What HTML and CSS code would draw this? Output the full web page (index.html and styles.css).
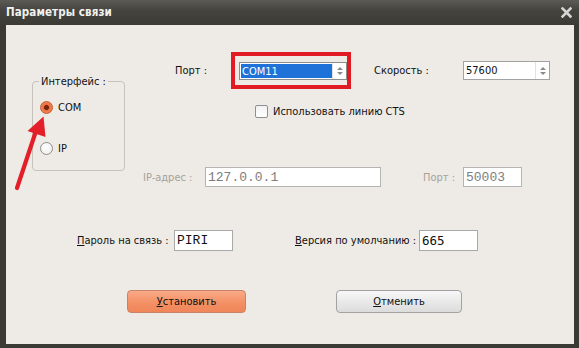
FILE: index.html
```html
<!DOCTYPE html>
<html lang="ru">
<head>
<meta charset="utf-8">
<title>Параметры связи</title>
<link rel="stylesheet" href="styles.css">
</head>
<body>
<div class="window">
  <div class="titlebar">
    <span class="title">Параметры связи</span>
    <svg class="close" width="11" height="11" viewBox="0 0 11 11"><path d="M1.5 1.5 L9.5 9.5 M9.5 1.5 L1.5 9.5" stroke="#d6d6d4" stroke-width="2.6" stroke-linecap="square"/></svg>
  </div>
  <div class="panel">
    <div class="top">
      <fieldset class="group">
        <legend>Интерфейс :</legend>
        <div class="radio-row first"><span class="radio on"></span><span>COM</span></div>
        <div class="radio-row second"><span class="radio"></span><span>IP</span></div>
      </fieldset>
      <div class="right">
        <div class="row row-port">
          <span class="lbl w-port">Порт :</span>
          <span class="mark">
            <span class="spin combo"><span class="spin-val sel">COM11</span><span class="spin-btn"><i class="up"></i><i class="down"></i></span></span>
          </span>
          <span class="lbl w-speed">Скорость :</span>
          <span class="spin speed"><span class="spin-val">57600</span><span class="spin-btn"><i class="up"></i><i class="down"></i></span></span>
        </div>
        <div class="row row-cts">
          <span class="check"></span><span>Использовать линию CTS</span>
        </div>
        <div class="row row-ip">
          <span class="lbl dis w-ip">IP-адрес :</span>
          <span class="field mono dis-field ip">127.0.0.1</span>
          <span class="lbl dis w-ipport">Порт :</span>
          <span class="field mono dis-field ipport">50003</span>
        </div>
      </div>
    </div>
    <div class="row row-pass">
      <span class="lbl w-pass"><u>П</u>ароль на связь :</span>
      <span class="field mono small">PIRI</span>
      <span class="lbl w-ver"><u>В</u>ерсия по умолчанию :</span>
      <span class="field mono2 small">665</span>
    </div>
    <div class="row row-buttons">
      <span class="btn primary"><u>У</u>становить</span>
      <span class="btn secondary"><u>О</u>тменить</span>
    </div>
    <svg class="arrow" width="60" height="170" viewBox="0 0 60 170"><path d="M11 163 L31 103" stroke="#e3202a" stroke-width="4.2" stroke-linecap="round"/><polygon points="37.5,91.5 21.5,106 39.5,112" fill="#e3202a"/></svg>
  </div>
</div>
</body>
</html>
```

FILE: styles.css
```css
* { box-sizing: border-box; }
html, body { margin: 0; padding: 0; }
body {
  font-family: "DejaVu Sans Condensed", "DejaVu Sans", sans-serif;
  font-stretch: condensed;
  font-size: 11px;
  color: #111;
  background: #3a3934;
}
.window {
  width: 579px;
  height: 348px;
  display: flex;
  flex-direction: column;
  background: #3a3934;
}
.titlebar {
  flex: none;
  height: 25px;
  display: flex;
  align-items: center;
  justify-content: space-between;
  padding: 0 7px 2px 6px;
  background: linear-gradient(#5c5b56, #45443f 40%, #3b3a35);
}
.title {
  color: #f2f2f0;
  font-weight: bold;
  font-size: 11.5px;
  letter-spacing: 0.1px;
}
.close { display: block; margin-top: 1px; }
.panel {
  flex: 1;
  margin: 0 5px 4px 6px;
  background: #eeebe6;
  position: relative;
}
.top {
  display: flex;
  align-items: flex-start;
}
.group {
  margin: 50px 0 0 26px;
  padding: 0 0 0 6px;
  width: 93px;
  height: 96px;
  border: 1px solid #c6c2bb;
  border-radius: 4px;
  flex: none;
}
.group legend {
  padding: 0 2px;
  margin-left: 0;
  line-height: 13px;
}
.radio-row {
  display: flex;
  align-items: center;
  gap: 5px;
  height: 13px;
  margin-left: 1px;
}
.radio-row.first { margin-top: 13px; }
.radio-row.second { margin-top: 28px; }
.radio {
  width: 13px;
  height: 13px;
  border-radius: 50%;
  border: 1px solid #8e8e8e;
  background: radial-gradient(circle at 40% 35%, #ffffff, #e9e9e9);
  flex: none;
}
.radio.on {
  border-color: #c45a2c;
  background: radial-gradient(circle, #7a2410 0 2.2px, #e9703c 2.8px, #f2946a 100%);
}
.right {
  display: flex;
  flex-direction: column;
}
.row {
  display: flex;
  align-items: center;
}
.lbl { flex: none; }
.dis { color: #a5a19a; }
.row-port { margin-top: 27px; margin-left: 50px; }
.w-port { width: 56px; }
.mark {
  display: flex;
  border: 4px solid #e01b24;
  padding: 6px 0 5px 4px;
  width: 120px;
}
.spin {
  display: flex;
  height: 19px;
  border: 1px solid #a3a3a3;
  background: #fff;
}
.combo { width: 108px; height: 18px; border-color: #8d8d8d; }
.speed { width: 87px; }
.spin-val {
  flex: 1;
  display: flex;
  align-items: center;
  padding-left: 2px;
}
.combo .spin-val {
  margin: 1px 0 1px 1px;
  padding-left: 1px;
}
.sel {
  background: #1f72d8;
  color: #fff;
}
.spin-btn {
  width: 14px;
  flex: none;
  border-left: 1px solid #e2e2e2;
  display: flex;
  flex-direction: column;
  align-items: center;
  justify-content: center;
  gap: 2px;
}
.spin-btn i {
  display: block;
  width: 0;
  height: 0;
  border-left: 3px solid transparent;
  border-right: 3px solid transparent;
}
.spin-btn .up { border-bottom: 3px solid #8a8a8a; }
.spin-btn .down { border-top: 3px solid #8a8a8a; }
.w-speed { width: 89px; margin-left: 23px; }
.row-cts { margin-top: 16px; margin-left: 130px; gap: 5px; }
.check {
  width: 13px;
  height: 13px;
  border: 1px solid #8f8f8f;
  border-radius: 2px;
  background: linear-gradient(#f2f2f2, #ffffff);
  flex: none;
}
.row-ip { margin-top: 49px; margin-left: 18px; }
.w-ip { width: 62px; }
.field {
  height: 20px;
  display: flex;
  align-items: center;
  padding-left: 2px;
  background: #fff;
  border: 1px solid #a9a9a9;
  flex: none;
}
.mono {
  font-family: "Liberation Mono", monospace;
  font-size: 13px;
}
.mono2 {
  font-family: "DejaVu Sans Mono", monospace;
  font-size: 12.5px;
}
.dis-field { color: #7d7d7d; border-color: #b4b4b4; }
.ip { width: 176px; }
.w-ipport { width: 40px; margin-left: 42px; }
.ipport { width: 59px; }
.row-pass { margin-top: 43px; padding-left: 71px; }
.w-pass { width: 97px; }
.small { width: 59px; height: 21px; }
.w-ver { width: 124px; margin-left: 62px; }
.row-buttons { margin-top: 39px; padding-left: 121px; gap: 90px; }
.btn {
  height: 23px;
  display: flex;
  align-items: center;
  justify-content: center;
  border-radius: 4px;
}
.primary {
  width: 119px;
  background: linear-gradient(#faa987, #f38f63 60%, #ef8659);
  border: 1px solid #c8846a;
}
.secondary {
  width: 126px;
  background: linear-gradient(#f8f8f8, #e9e9e9 50%, #dcdcdc);
  border: 1px solid #a2a2a2;
}
.arrow {
  position: absolute;
  left: 0;
  top: 0;
}
```
